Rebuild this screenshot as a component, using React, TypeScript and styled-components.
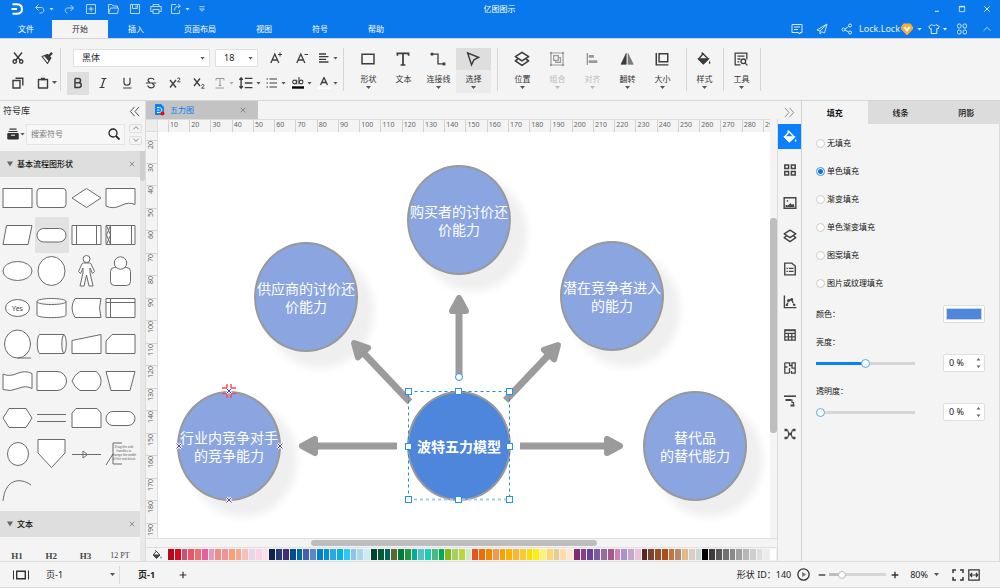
import React, { useState } from "react";
import styled, { createGlobalStyle, css } from "styled-components";

const Global = createGlobalStyle`
  *, *::before, *::after { box-sizing: border-box; }
  html, body { margin: 0; padding: 0; }
  body {
    font-family: "Noto Sans", "Noto Sans CJK SC", sans-serif;
    font-size: 8px;
    line-height: 12px;
    color: #222;
    background: #f4f4f4;
  }
  button, input, select { font: inherit; color: inherit; margin: 0; padding: 0; }
  button { background: none; border: 0; cursor: pointer; }
  svg { display: block; flex: none; }
`;

/* ---------- icons ---------- */

type IconProps = { d?: string; size?: number; w?: number; fill?: string; children?: React.ReactNode };

const Icon = ({ d, size = 12, w = 1, fill = "none", children }: IconProps) => (
  <svg width={size} height={size} viewBox="0 0 12 12" fill={fill} stroke="currentColor" strokeWidth={w} aria-hidden="true">
    {d && <path d={d} />}
    {children}
  </svg>
);

const Caret = styled.span<{ $color?: string }>`
  flex: none;
  width: 5px;
  height: 3px;
  background: ${(p) => p.$color ?? "#555"};
  clip-path: polygon(0 0, 100% 0, 50% 100%);
`;

const BucketIcon = ({ size = 12 }: { size?: number }) => (
  <Icon size={size} w={1.2}>
    <path d="M5.2 1.5L9.6 6L5.4 10L1.4 6Z" strokeLinejoin="round" />
    <path d="M1.6 6H9.4L5.4 9.8Z" fill="currentColor" />
    <path d="M4 .4L5.6 2.4" />
    <path d="M10.8 7.6C11.8 9.2 11.6 10.2 10.8 10.2S9.8 9.2 10.8 7.6Z" fill="currentColor" stroke="none" />
  </Icon>
);

const LayersIcon = ({ size = 12 }: { size?: number }) => (
  <Icon size={size} w={1.2}>
    <path d="M6 1L11 4.2L6 7.4L1 4.2Z" strokeLinejoin="round" />
    <path d="M3 6L1 7.400L6 10.800L11 7.400L9 6" strokeLinejoin="round" />
  </Icon>
);

/* ---------- page frame ---------- */

const Page = styled.div`
  display: flex;
  flex-direction: column;
  height: 100vh;
  overflow: hidden;
  border-bottom: 1px solid #dcdcdc;
`;

const Header = styled.header`
  flex: none;
  background: #0a78ed;
  color: #fff;
  border-bottom: 1px solid #d0d4da;
`;

const TitleRow = styled.div`
  display: grid;
  grid-template-columns: 1fr auto 1fr;
  align-items: center;
  height: 20px;
  padding: 0 1px 2px 0;
`;

const Title = styled.h1`
  margin: 0;
  font-size: 8px;
  font-weight: 400;
`;

const QuickBar = styled.div`
  display: flex;
  align-items: center;
  padding-left: 11px;
  color: #b5d7fb;
`;

const Logo = styled.div`
  width: 19px;
  color: #fff;
`;

const BarGroup = styled.div`
  display: flex;
  justify-content: flex-end;
  align-items: center;
  color: #d8eafd;
`;

const BarButton = styled.button<{ $w?: number }>`
  display: flex;
  align-items: center;
  justify-content: center;
  gap: 3px;
  width: ${(p) => p.$w ?? 25}px;
  height: 18px;
`;

const UserButton = styled.button`
  display: flex;
  align-items: center;
  gap: 1px;
  padding: 0 4px 0 0;
  font-size: 9px;
  color: #e6f1fe;
  ${Caret} { margin-left: 3px; }
`;

const MenuRow = styled.div`
  display: flex;
  justify-content: space-between;
  height: 18px;
  padding-right: 1px;
`;

const Menu = styled.nav`
  display: flex;
`;

const MenuTab = styled.button<{ $active?: boolean }>`
  padding: 0 20px;
  &:first-child { padding: 0 18px; }
  ${(p) => p.$active && css`background: #f4f4f4; color: #333;`}
`;

/* ---------- ribbon ---------- */

const Ribbon = styled.div`
  flex: none;
  display: flex;
  align-items: flex-start;
  height: 62px;
  padding-top: 7px;
  border-bottom: 1px solid #d4d4d4;
  color: #3c3c3c;
`;

const Rule = styled.span`
  flex: none;
  width: 1px;
  height: 43px;
  margin-top: 2px;
  background: #d6d6d6;
`;

const ClipGroup = styled.div`
  display: grid;
  grid-template-columns: 28px 26px;
  grid-template-rows: 24px 24px;
  row-gap: 1px;
  padding-left: 6px;
`;

const TextGroup = styled.div`
  display: grid;
  grid-template-rows: 24px 24px;
  row-gap: 1px;
  width: 282px;
`;

const ToolRow = styled.div<{ $inset: number }>`
  display: flex;
  align-items: center;
  padding-left: ${(p) => p.$inset}px;
`;

const Tool = styled.button<{ $w?: number; $active?: boolean; $dim?: boolean }>`
  display: flex;
  align-items: center;
  justify-content: center;
  gap: 3px;
  width: ${(p) => p.$w ?? 24}px;
  height: 23px;
  ${(p) => p.$active && css`background: #dedede; margin-right: 2px;`}
  ${(p) => p.$dim && css`color: #999;`}
`;

const SelectBox = styled.label<{ $w: number }>`
  display: flex;
  align-items: center;
  width: ${(p) => p.$w}px;
  height: 18px;
  margin-right: 5px;
  padding-right: 4px;
  background: #fff;
  border: 1px solid #e0e0e0;
  border-radius: 1px;
`;

const Select = styled.select`
  appearance: none;
  flex: 1;
  min-width: 0;
  padding-left: 8px;
  border: 0;
  background: none;
  font-size: 9px;
  color: #222;
`;

const BigGroup = styled.div`
  display: flex;
  padding: 2px 6px 0 7px;
`;

const SoloGroup = styled(BigGroup)`
  padding: 2px 1px 0 0;
`;

const BigTool = styled.button<{ $active?: boolean; $off?: boolean }>`
  display: flex;
  flex-direction: column;
  align-items: center;
  width: 35px;
  height: 45px;
  line-height: 10px;
  white-space: nowrap;
  color: ${(p) => (p.$off ? "#bbb" : "#333")};
  background: ${(p) => (p.$active ? "#ebebeb" : "none")};
  & > i {
    display: flex;
    align-items: center;
    justify-content: center;
    width: 100%;
    height: 22px;
    margin-bottom: 4px;
    padding-right: 1px;
    color: ${(p) => (p.$off ? "#999" : "#3c3c3c")};
    background: ${(p) => (p.$active ? "#dedede" : "none")};
  }
  ${Caret} { margin-top: 2px; }
`;

/* ---------- body ---------- */

const Body = styled.div`
  flex: 1;
  min-height: 0;
  display: flex;
`;

const Library = styled.aside`
  flex: none;
  display: flex;
  flex-direction: column;
  width: 146px;
  border-right: 1px solid #dcdcdc;
`;

const LibTitle = styled.div`
  display: flex;
  align-items: center;
  justify-content: space-between;
  height: 20px;
  padding: 0 5px 0 3px;
  font-size: 9px;
  color: #333;
`;

const LibSearch = styled.div`
  display: flex;
  align-items: center;
  height: 30px;
  padding: 0 3px 4px 7px;
`;

const LibMenu = styled.button`
  display: flex;
  flex: none;
  align-items: center;
  gap: 1px;
  width: 19px;
  color: #333;
`;

const SearchBox = styled.label`
  display: flex;
  align-items: center;
  flex: 1;
  min-width: 0;
  height: 21px;
  padding: 0 4px;
  background: #f7f7f7;
  border: 1px solid #e4e4e4;
  input {
    flex: 1;
    min-width: 0;
    border: 0;
    outline: 0;
    background: none;
  }
  input::placeholder { color: #777; }
`;

const Steps = styled.div`
  flex: none;
  display: grid;
  gap: 3px;
  margin-left: 4px;
`;

const Step = styled.button`
  display: flex;
  align-items: center;
  justify-content: center;
  width: 13px;
  height: 9px;
  border: 1px solid #ddd;
  border-radius: 2px;
  color: #666;
`;

const LibScroll = styled.div`
  flex: 1;
  min-height: 0;
  display: flex;
  overflow: hidden;
`;

const LibList = styled.div`
  flex: 1;
  min-width: 0;
`;

const ScrollTrack = styled.div`
  flex: none;
  width: 5px;
  background: #e9e9e9;
`;

const ScrollThumb = styled.div`
  height: 30px;
  background: #cfcfcf;
  border-radius: 0 0 3px 3px;
`;

const SectionHead = styled.div`
  display: flex;
  align-items: center;
  gap: 4px;
  height: 26px;
  padding: 0 4px 0 7px;
  background: #dedede;
  font-weight: 500;
  color: #111;
  button { margin-left: auto; color: #777; }
`;

const ShapeGrid = styled.div`
  display: grid;
  grid-template-columns: repeat(4, 1fr);
  grid-template-rows: repeat(9, 1fr);
  height: 334px;
  padding: 3px 2px 2px 0;
`;

const ShapeCell = styled.button<{ $active?: boolean }>`
  display: flex;
  align-items: center;
  justify-content: center;
  overflow: hidden;
  background: ${(p) => (p.$active ? "#e2e2e2" : "none")};
`;

const TextShapes = styled.div`
  display: grid;
  grid-template-columns: repeat(4, 1fr);
  padding: 14px 3px 0 0;
`;

const TextShape = styled.button<{ $small?: boolean }>`
  font-family: "Liberation Serif", serif;
  font-size: ${(p) => (p.$small ? 8 : 9)}px;
  font-weight: ${(p) => (p.$small ? 400 : 700)};
  line-height: 10px;
  color: #444;
  white-space: nowrap;
`;

/* ---------- canvas ---------- */

const Work = styled.main`
  flex: 1;
  min-width: 0;
  display: flex;
  flex-direction: column;
`;

const DocTabs = styled.div`
  flex: none;
  height: 18px;
  display: flex;
`;

const DocTab = styled.div`
  display: flex;
  align-items: center;
  gap: 5px;
  width: 112px;
  padding: 0 11px 0 8px;
  background: #c3c3c3;
  color: #0a7cf5;
  button { margin-left: auto; color: #777; }
`;

const Stage = styled.div`
  flex: 1;
  min-height: 0;
  display: grid;
  grid-template-columns: 12px 1fr 8px;
  grid-template-rows: 13px 1fr 10px;
`;

const Corner = styled.div`
  background: #ececec;
  border: 1px solid #ddd;
  border-width: 1px 1px 1px 0;
`;

const TopRuler = styled.div`
  display: grid;
  grid-template-columns: 10px repeat(28, 3fr) 1fr;
  overflow: hidden;
  border-top: 1px solid #ddd;
  font-size: 7px;
  line-height: 9px;
  color: #666;
  span {
    min-width: 0;
    padding-left: 1px;
    border-left: 1px solid #d2d2d2;
  }
  span:first-child { border: 0; }
`;

const SideRuler = styled.div`
  display: grid;
  grid-template-rows: 8px repeat(17, 3fr) 2fr;
  overflow: hidden;
  border-right: 1px solid #ddd;
  font-size: 7px;
  line-height: 9px;
  color: #666;
  span {
    display: flex;
    min-height: 0;
    border-top: 1px solid #d2d2d2;
  }
  span:first-child { border: 0; }
  b {
    font-weight: 400;
    writing-mode: vertical-rl;
    transform: rotate(180deg);
    align-self: flex-start;
  }
`;

const Canvas = styled.div`
  position: relative;
  overflow: hidden;
  background: #fff;
`;

const Overlay = styled.svg`
  position: absolute;
  left: 0;
  top: 0;
`;

const Node = styled.div<{ $x: number; $y: number; $main?: boolean }>`
  position: absolute;
  left: ${(p) => p.$x - 52}px;
  top: ${(p) => p.$y - 55}px;
  display: flex;
  align-items: center;
  justify-content: center;
  width: 104px;
  height: 110px;
  border: 2px solid #999;
  border-radius: 50%;
  background: ${(p) => (p.$main ? "#4d86db" : "#8aa5e0")};
  box-shadow: ${(p) => (p.$main ? "none" : "14px 14px 8px 2px #efefef")};
  color: #fff;
  font-size: 14px;
  line-height: 18px;
  font-weight: ${(p) => (p.$main ? 700 : 400)};
  font-family: "Noto Sans CJK SC", sans-serif;
  text-align: center;
  white-space: pre;
`;

const VTrack = styled.div`
  grid-row: 1 / 3;
  grid-column: 3;
  display: grid;
  grid-template-rows: 99fr 216fr 105fr;
  border-right: 1px solid #dcdcdc;
  i { grid-row: 2; background: #bdbdbd; border-radius: 3px; }
`;

const HTrack = styled.div`
  grid-column: 1 / 4;
  display: grid;
  grid-template-columns: 165fr 286fr 180fr;
  border: 1px solid #e0e0e0;
  border-width: 1px 1px 1px 0;
  padding: 1px 0;
  i { grid-column: 2; background: #bdbdbd; border-radius: 3px; }
`;

const Palette = styled.div`
  flex: none;
  display: flex;
  height: 13px;
  padding: 1px 0;
  border-right: 1px solid #dcdcdc;
`;

const PaletteFill = styled.button`
  display: flex;
  align-items: center;
  justify-content: center;
  width: 22px;
  color: #444;
`;

const Swatch = styled.button`
  flex: 1;
  min-width: 0;
  border-right: 1px solid #f0eeee;
`;

/* ---------- right side ---------- */

const Strip = styled.div`
  flex: none;
  display: flex;
  flex-direction: column;
  width: 24px;
  border-right: 1px solid #d4d4d4;
  color: #444;
`;

const StripTop = styled.button`
  display: flex;
  align-items: center;
  justify-content: center;
  height: 23px;
  color: #777;
`;

const StripButton = styled.button<{ $active?: boolean }>`
  display: flex;
  align-items: center;
  justify-content: center;
  height: 25px;
  margin-bottom: 8px;
  ${(p) => p.$active && css`background: #0a80ff; color: #fff;`}
`;

const Panel = styled.aside`
  flex: none;
  width: 198px;
  border-right: 1px solid #dcdcdc;
  color: #111;
`;

const PanelTabs = styled.div`
  display: grid;
  grid-template-columns: repeat(3, 1fr);
  height: 23px;
`;

const PanelTab = styled.button<{ $active?: boolean }>`
  background: ${(p) => (p.$active ? "none" : "#dcdcdc")};
  font-weight: ${(p) => (p.$active ? 700 : 500)};
`;

const RadioList = styled.div`
  display: grid;
  grid-auto-rows: 28px;
  padding: 5px 0 0 14px;
`;

const RadioRow = styled.label`
  display: flex;
  align-items: center;
  gap: 2px;
  input {
    appearance: none;
    width: 9px;
    height: 9px;
    border: 1px solid #ccc;
    border-radius: 50%;
    background: #fff;
  }
  input:checked {
    border-color: #3a8ff0;
    background: radial-gradient(circle, #0a6fe8 0 2px, #fff 3px);
  }
`;

const Settings = styled.div`
  padding: 8px 14px 0;
`;

const SetRow = styled.div`
  display: flex;
  align-items: center;
  justify-content: space-between;
  height: 18px;
`;

const SetLabel = styled.label`
  display: block;
  padding: 13px 0 6px;
`;

const ColorButton = styled.button`
  width: 42px;
  height: 18px;
  padding: 2px;
  background: #fff;
  border: 1px solid #ddd;
  border-radius: 2px;
  i { display: block; height: 12px; background: #4d86db; border: 1px solid #c9d4e8; }
`;

const Range = styled.input<{ $pct: number; $w: number; $on: string; $ring: string; $r: number }>`
  appearance: none;
  width: ${(p) => p.$w}px;
  height: 10px;
  background: linear-gradient(
      to right,
      ${(p) => p.$on} ${(p) => p.$pct}%,
      #d6d6d6 ${(p) => p.$pct}%
    ) center / 100% 3px no-repeat;
  &::-webkit-slider-thumb {
    appearance: none;
    width: ${(p) => p.$r}px;
    height: ${(p) => p.$r}px;
    border: 1px solid ${(p) => p.$ring};
    border-radius: 50%;
    background: #fff;
  }
`;

const Spin = styled.div`
  display: flex;
  align-items: center;
  width: 42px;
  height: 18px;
  padding-right: 3px;
  background: #fff;
  border: 1px solid #e0e0e0;
  border-radius: 2px;
  input {
    width: 32px;
    padding-left: 5px;
    border: 0;
    background: none;
    font-size: 9px;
    color: #222;
  }
`;

const SpinArrows = styled.svg`
  margin-left: auto;
`;

/* ---------- status bar ---------- */

const Status = styled.footer`
  flex: none;
  display: flex;
  align-items: center;
  height: 26px;
  border-top: 1px solid #dcdcdc;
  font-size: 9px;
  color: #222;
`;

const PageView = styled.button`
  width: 42px;
  padding-left: 13px;
`;

const PageSelect = styled.label`
  display: flex;
  align-items: center;
  width: 78px;
  height: 18px;
  padding-right: 4px;
  border-right: 1px solid #dcdcdc;
  select { padding-left: 4px; }
`;

const PageTab = styled.button`
  margin-left: 18px;
  font-weight: 700;
`;

const StatusIcon = styled.button<{ $w: number }>`
  display: flex;
  align-items: center;
  justify-content: center;
  width: ${(p) => p.$w}px;
  height: 18px;
  color: #333;
`;

const StatusEnd = styled.div`
  display: flex;
  align-items: center;
  margin-left: auto;
  padding-right: 18px;
`;

const Zoom = styled.button`
  display: flex;
  align-items: center;
  gap: 6px;
  padding: 0 11px 0 6px;
`;

const AddPage = styled(StatusIcon)`
  margin-left: 17px;
`;

/* ---------- data ---------- */

const shapes: { name: string; draw: React.ReactNode }[] = [
  { name: "流程", draw: <rect x="3" y="8.5" width="29" height="19" /> },
  { name: "圆角矩形", draw: <rect x="3" y="8.5" width="29" height="19" rx="3" /> },
  { name: "判定", draw: <path d="M3 18L17.5 8.5L32 18L17.5 27.5Z" /> },
  { name: "文档", draw: <path d="M3 8.5H32V24.5Q26 21.5 18 25.5T3 26Z" /> },
  { name: "数据", draw: <path d="M6.5 8.5H32L28 27.5H3Z" /> },
  { name: "起止符", draw: <rect x="3" y="11.5" width="29" height="13.5" rx="6.7" /> },
  { name: "预定义流程", draw: <path d="M3 8.5H32V27.5H3ZM7.500 8.500V27.500M27.500 8.500V27.500" /> },
  { name: "准备流程", draw: <path d="M3 8.5H32V27.5H3ZM7.500 8.500V27.500M28.500 8.500V27.500M3.500 8.500L7.500 18L3.500 27.500M7.500 8.500L3.500 18L7.500 27.500" /> },
  { name: "椭圆", draw: <ellipse cx="17.500" cy="18" rx="14.500" ry="9.500" /> },
  { name: "圆形", draw: <ellipse cx="17.500" cy="18" rx="13.500" ry="14.500" /> },
  { name: "人", draw: <><circle cx="17.500" cy="6" r="3.500" /><path d="M14.500 10H20.500Q22 10 22.500 12L25.500 18.500L23.500 20.500L21 15V20L24 33H20L17.500 22L15 33H11L14 20V15L11.500 20.500L9.500 18.500L12.500 12Q13 10 14.500 10Z" /></> },
  { name: "用户", draw: <><rect x="7.500" y="14.500" width="20" height="18" rx="4" /><circle cx="17.500" cy="10" r="6.200" /></> },
  { name: "是", draw: <><ellipse cx="17.500" cy="18" rx="12" ry="8.500" /><text x="17.500" y="20.500" fontSize="7" textAnchor="middle" fill="#444" stroke="none">Yes</text></> },
  { name: "数据库", draw: <path d="M3 11.500C3 7.500 32 7.500 32 11.500V25C32 28.500 3 28.500 3 25ZM3 11.500C3 15.500 32 15.500 32 11.500" /> },
  { name: "存储数据", draw: <path d="M6 8.500H32Q29 18 32 27.500H6Q0 18 6 8.500Z" /> },
  { name: "内部存储", draw: <path d="M3 8.500H32V27.500H3ZM7.500 8.500V27.500M3 12.500H32" /> },
  { name: "顺序数据", draw: <><ellipse cx="17.500" cy="18" rx="13" ry="14" /><path d="M17.500 32H31" /></> },
  { name: "直接数据", draw: <path d="M5.500 8.500H30C33 11 33 25 30 27.500H5.500C2.500 25 2.500 11 5.500 8.500ZM30 8.500C27 11 27 25 30 27.500" /> },
  { name: "手动输入", draw: <path d="M3 14.500L32 8.500V27.500H3Z" /> },
  { name: "卡片", draw: <path d="M9 8.500H32V27.500H3V15Z" /> },
  { name: "纸带", draw: <path d="M3 11Q9 14 17 10.500T32 10.500V25.500Q26 22 18 25.500T3 26.500Z" /> },
  { name: "延期", draw: <path d="M3 8.500H23A9.500 9.500 0 0 1 23 27.500H3Z" /> },
  { name: "显示", draw: <path d="M11 8.500H27Q32 12 32 18T27 27.500H11Q5 24 3 18Q5 12 11 8.500Z" /> },
  { name: "手动操作", draw: <path d="M3 8.500H32L27 27.500H8Z" /> },
  { name: "准备", draw: <path d="M3 18L9 8.500H26L32 18L26 27.500H9Z" /> },
  { name: "并行模式", draw: <path d="M3 14.500H32M3 21.500H32" /> },
  { name: "循环界限", draw: <path d="M7 8.500H28L32 13V27.500H3V13Z" /> },
  { name: "终止符", draw: <rect x="3" y="11.500" width="29" height="14" rx="7" /> },
  { name: "跨页引用", draw: <ellipse cx="18" cy="18" rx="10.500" ry="11.500" /> },
  { name: "离页引用", draw: <path d="M4 3.500H31V17L17.500 31.500L4 17Z" /> },
  { name: "箭头线", draw: <path d="M3 18.500H32M14 15V22L18.500 18.500Z" /> },
  {
    name: "注释",
    draw: (
      <>
        <path d="M19 7H10V28H19M10 18L3 29" fill="none" />
        <g fontSize="3" textAnchor="middle" fill="#555" stroke="none">
          <text x="21" y="12">Drag the side</text>
          <text x="21" y="16">handles to</text>
          <text x="21" y="20">change the width</text>
          <text x="21" y="24">of the text block</text>
        </g>
      </>
    ),
  },
  { name: "弧线", draw: <path d="M3 28C5 6 20 4 31 12" fill="none" /> },
];

const colors = (
  "b50819 dc0a1e c8527a ef5366 ee6c72 e95e9e e39ab9 ee8d86 f2919b ff9d73 f2ab92 f7bebb ead5e9 ffd2e3 ffdfe6 " +
  "0f2350 243b76 40307c 004b93 0068a6 4262ae 5a87c6 007fcf 0090d8 2ea8e0 00b2ee 2dc8f8 8cc3ea a3daf0 cdeaf5 " +
  "004431 005a36 00665c 566b30 007b3c 1f973f 00ad9b 55bfc2 1bcdb3 4bb983 00ae50 80bb17 a6d065 b9d73e cfe8c9 " +
  "e8531f ee6c00 f28800 f4984e f5a400 ffb300 fdb62f fcc92e ffdc00 fff000 fbf17b ffd574 e9cb93 ffdca9 fde8cf " +
  "7b3072 85408a 65429a 7a5b9f 9a6a9f a25a8b d181b4 a893cf c6a7c9 eac0da " +
  "572a1d 7b4231 964e2a a94f1f c1763b b6886c e0b987 d6cfc7 cbd6cc " +
  "000000 403b3b 585858 727272 8a8a8a a0a0a0 b6b6b6 cccfce dedede ececec ffffff"
).split(" ");

const nodes = [
  { x: 301, y: 88, text: "购买者的讨价还\n价能力" },
  { x: 148, y: 165, text: "供应商的讨价还\n价能力" },
  { x: 454, y: 164, text: "潜在竞争者进入\n的能力" },
  { x: 71, y: 314, text: "行业内竞争对手\n的竞争能力" },
  { x: 537, y: 314, text: "替代品\n的替代能力" },
  { x: 301, y: 314, text: "波特五力模型", main: true },
];

const arrows = [
  { x: 301, y: 163, angle: -90, len: 80 },
  { x: 141, y: 314, angle: 180, len: 98 },
  { x: 465, y: 314, angle: 0, len: 103 },
  { x: 194, y: 209, angle: -133.5, len: 84 },
  { x: 402, y: 211, angle: -46.5, len: 79 },
];

const fills = ["无填充", "单色填充", "渐变填充", "单色渐变填充", "图案填充", "图片或纹理填充"];
const menus = ["文件", "开始", "插入", "页面布局", "视图", "符号", "帮助"];
const handles = [[250, 259], [300, 259], [351, 259], [250, 314], [351, 314], [250, 367], [300, 367], [351, 367]];
const anchors = [[71, 259], [21, 314], [122, 314], [71, 368]];

const shapeTools = [
  { name: "形状", icon: <Icon size={16} w={1.1} d="M1.500 2.500H10.500V9.500H1.500Z" />, caret: true },
  { name: "文本", icon: <Icon size={16} w={1.3} d="M1.800 3.500V1.700H10.200V3.500M6 1.700V10.500M4.200 10.500H7.800" /> },
  { name: "连接线", icon: <Icon size={16} w={1}><path d="M2 2.300H6V9.700H10" /><circle cx="1.500" cy="2.300" r=".7" fill="currentColor" /><circle cx="10.500" cy="9.700" r=".7" fill="currentColor" /></Icon>, caret: true },
  { name: "选择", icon: <Icon size={16} w={1.1} d="M2 1.500L10.200 4.800L6.700 6.600L4.900 10.400Z" />, caret: true, active: true },
];

const arrangeTools = [
  { name: "位置", icon: <LayersIcon size={16} /> },
  { name: "组合", off: true, icon: <Icon size={16} w={0.9}><path d="M1.500 1.500H10.500V10.500H1.500ZM3.500 3.500H7V7H3.500ZM7 5H8.600V8.600H5V7" /><path d="M.7 1.500H2.300M9.700 1.500H11.300M.7 10.500H2.300M9.700 10.500H11.300" strokeWidth="1.600" /></Icon> },
  { name: "对齐", off: true, icon: <Icon size={16} w={1}><path d="M2.500 1.500V10.500" /><path d="M3.500 4H7.500M3.500 8H10" strokeWidth="2" /></Icon> },
  { name: "翻转", icon: <Icon size={16} w={0.5}><path d="M5.400 1.800V10H1.500Z" fill="currentColor" /><path d="M6.800 1.800V10H10.700Z" fill="currentColor" opacity=".65" /></Icon> },
  { name: "大小", icon: <Icon size={16} w={1.1}><path d="M3.800 2H10.300V8H3.800Z" /><path d="M1.700 1.500V10.400H10.800" /></Icon> },
];

const strip = [
  { name: "填充", icon: <BucketIcon size={14} /> },
  { name: "符号", icon: <Icon w={1.5}><path d="M.8 1H4.600V4.600H.8ZM7.400 1H11.200V4.600H7.400ZM.8 7.400H4.600V11H.8ZM7.400 7.400H11.200V11H7.400Z" /></Icon> },
  { name: "图片", icon: <Icon size={14} w={1.2}><path d="M1 1.500H11V10.500H1Z" /><path d="M2.200 9.400V7.400L4.200 8.200L6.500 6L7.500 7.400L9 6.600L9.900 9.400Z" fill="currentColor" stroke="none" /><circle cx="3.800" cy="4.200" r=".7" fill="currentColor" stroke="none" /></Icon> },
  { name: "图层", icon: <LayersIcon size={14} /> },
  { name: "页面", icon: <Icon size={14} w={1.2}><path d="M1.500 1H7.500L10.500 3.500V11H1.500Z" /><path d="M3 5.500H4.200M5 5.500H9M3 8H4.200M5 8H9" /></Icon> },
  { name: "图表", icon: <Icon size={14} w={1.2}><path d="M1.200 .5V10.800H11.500" /><path d="M3.400 8.600L4.600 5.500M7.900 5L9.400 8.600M5.300 4.600L7 4" strokeDasharray="2 .6" /><circle cx="4.800" cy="4.800" r=".7" fill="currentColor" /><circle cx="7.500" cy="3.800" r=".7" fill="currentColor" /><circle cx="3.300" cy="8.500" r=".4" /><circle cx="9.700" cy="8.500" r=".4" /></Icon> },
  { name: "表格", icon: <Icon w={1.3}><path d="M.8 .8H11.200V11.200H.8ZM.8 4.400H11.200M.8 7.800H11.200M4.400 4.400V11M7.800 4.400V11" /><path d="M1 1.500H11" /></Icon> },
  { name: "平面图", icon: <Icon w={1.3}><path d="M.8 .8H5.600V3.500H8V.8H11.200V11.200H7.500V9M5 11.200H.8V.8M.8 5H3.500M5.500 6V11.200M7.500 6.200H11.200M8 3.500V6" /></Icon> },
  { name: "样式", icon: <Icon w={1.6}><path d="M0 1.200H12" /><path d="M8 4.500V7.500H9.500V10.500" strokeWidth="1.200" /><path d="M1.500 5H7.500M6.500 10.400H10.500" strokeWidth="2" /></Icon> },
  { name: "思维导图", icon: <Icon w={1.2}><path d="M1.500 2H3.500L5 6L3.500 10H1.500M10.500 2H8.500L7 6L8.500 10H10.500M4 6H8" /><path d="M.5 2H3M.5 10H3M9 2H11.500M9 10H11.500M5 6H7" strokeWidth="2.400" /></Icon> },
];

const Arrow = ({ x, y, angle, len }: { x: number; y: number; angle: number; len: number }) => (
  <g transform={`translate(${x} ${y}) rotate(${angle})`} stroke="#9b9b9b" fill="#9b9b9b">
    <path d={`M${-len} 0H-12`} strokeWidth="7" />
    <path d="M-3 0L-16 -7V7Z" strokeWidth="6" strokeLinejoin="round" />
  </g>
);

const Close = ({ label }: { label: string }) => (
  <button aria-label={label}>
    <Icon size={8} w={1.2} d="M2.500 2.500L9.500 9.500M9.500 2.500L2.500 9.500" />
  </button>
);

const Arrows = () => (
  <SpinArrows width="5" height="12" viewBox="0 0 5 12" fill="#666" aria-hidden="true">
    <path d="M.5 3.500H4.500L2.500 1ZM.5 8.500H4.500L2.500 11Z" />
  </SpinArrows>
);

/* ---------- app ---------- */

export default function App() {
  const [fill, setFill] = useState(1);
  const [light, setLight] = useState(50);
  const [alpha, setAlpha] = useState(0);
  const [zoom, setZoom] = useState(18);

  return (
    <Page>
      <Global />
      <Header>
        <TitleRow>
          <QuickBar>
            <Logo>
              <Icon w={2} d="M1.500 1.200H5.500C9.800 1.200 11 3.600 11 6S9.800 10.800 5.500 10.800H1.500M.5 6H6" />
            </Logo>
            <BarButton $w={28} aria-label="撤销"><Icon d="M4.500 1.500L1.500 4.500L4.500 7.500M1.500 4.500H7.500C10.500 4.500 10.500 9.500 7.500 10H5.500" /><Caret $color="#cfe4fc" /></BarButton>
            <BarButton $w={22} aria-label="重做"><Icon d="M7.500 2L10.500 5L7.500 8M10.500 5H4.500C1.500 5 1.500 9.500 4.500 10" /></BarButton>
            <BarButton $w={22} aria-label="新建"><Icon d="M1.500 1.500H10.500V10.500H1.500ZM6 3.500V8.500M3.500 6H8.500" /></BarButton>
            <BarButton $w={22} aria-label="打开"><Icon d="M1.500 10.500V1.500H5L6 3H10.500V5M1.500 10.500L3.500 5H11.500L10.500 10.500Z" /></BarButton>
            <BarButton $w={21} aria-label="保存"><Icon d="M1.500 1.500H10.500V10.500H1.500ZM3.500 1.500V5.500H8.500V1.500M7 2.500V4.500" /></BarButton>
            <BarButton $w={22} aria-label="打印"><Icon d="M3 3.500V1.500H9V3.500M3 8.500H.8V3.500H11.200V8.500H9M3 6.500H9V10.500H3Z" /></BarButton>
            <BarButton $w={26} aria-label="导出"><Icon d="M6 1.500H1.500V10.500H9.500V7M4.500 7.500C4.500 4.500 6.500 3 10 3M8 1L10.500 3L8 5" /><Caret $color="#cfe4fc" /></BarButton>
            <BarButton $w={18} aria-label="自定义"><Icon size={8} w={1.4} d="M2 2.500H10"><path d="M2.500 6H9.500L6 9.500Z" /></Icon></BarButton>
          </QuickBar>
          <Title>亿图图示</Title>
          <BarGroup>
            <BarButton aria-label="最小化"><Icon size={8} w={1.6} d="M3 9.500H9" /></BarButton>
            <BarButton aria-label="最大化"><Icon size={8} w={1.3}><path d="M2 2H10V10H2Z" /><path d="M2 2.500H10" strokeWidth="2" /></Icon></BarButton>
            <BarButton aria-label="关闭"><Icon size={8} w={1.5} d="M2 2L10 10M10 2L2 10" /></BarButton>
          </BarGroup>
        </TitleRow>
        <MenuRow>
          <Menu>
            {menus.map((m, i) => (
              <MenuTab key={m} $active={i === 1}>{m}</MenuTab>
            ))}
          </Menu>
          <BarGroup>
            <BarButton aria-label="评论"><Icon d="M1 1.500H11V9.500H9V11L7 9.500H1ZM3 4H9M3 6.500H7" /></BarButton>
            <BarButton aria-label="发送"><Icon w={0.9} d="M11 1L1 7L4 8V11L5.500 8.800L8.500 10L11 1L4 8" /></BarButton>
            <BarButton aria-label="分享"><Icon><circle cx="2.500" cy="6.500" r="1.500" /><circle cx="9" cy="2.500" r="1.500" /><circle cx="9" cy="9.500" r="1.500" /><path d="M4 6L7.500 3.500M4 7L7.500 9" /></Icon></BarButton>
            <UserButton>
              Lock.Lock
              <svg width="12" height="12" viewBox="0 0 12 12" aria-hidden="true">
                <path d="M2.500 .5H9.500L12 4V6L6.500 12H5.500L0 6V4Z" fill="#f7ae3d" />
                <path d="M3.500 4L6 7.500L8.500 4" fill="none" stroke="#fff" strokeWidth="1.600" />
              </svg>
              <Caret $color="#e6f1fe" />
            </UserButton>
            <BarButton $w={23} aria-label="主题"><Icon d="M4 1.500C4.500 3 7.500 3 8 1.500L11.200 3.500L10 6L8.800 5.500V10.500H3.200V5.500L2 6L.8 3.500Z" /><Caret $color="#e6f1fe" /></BarButton>
            <BarButton aria-label="应用"><Icon><rect x="1.500" y="1" width="3.500" height="4" rx="1.500" /><rect x="7" y="1" width="3.500" height="4" rx="1.500" /><rect x="1.500" y="7" width="3.500" height="4" rx="1.500" /><rect x="7" y="7" width="3.500" height="4" rx="1.500" /></Icon></BarButton>
            <BarButton aria-label="收起功能区"><Icon size={10} d="M2 8L6 4L10 8" /></BarButton>
          </BarGroup>
        </MenuRow>
      </Header>

      <Ribbon>
        <ClipGroup>
          <Tool aria-label="剪切"><Icon w={1.4}><path d="M2 .5L8.500 8.500M10 .5L3.500 8.500" /><circle cx="2.800" cy="9.500" r="1.700" /><circle cx="9.200" cy="9.500" r="1.700" /></Icon></Tool>
          <Tool $w={26} aria-label="格式刷"><Icon w={1.1}><path d="M1 4.500L6.500 2.500L9.800 6L6.500 11.500Z" strokeLinejoin="round" /><path d="M6 3L9.500 6.200L8 8.500L3.800 4Z" fill="currentColor" /><path d="M8 4L11 .8" strokeWidth="2.400" /></Icon></Tool>
          <Tool aria-label="复制"><Icon w={1.4}><path d="M1 3.500H8V11H1Z" /><path d="M3.500 1.200H10.800V8.500" /></Icon></Tool>
          <Tool $w={26} aria-label="粘贴"><Icon w={1.4}><path d="M1.500 2.500H10.500V11H1.500Z" strokeLinejoin="round" /><path d="M4 2H8" strokeWidth="2.500" /></Icon><Caret /></Tool>
        </ClipGroup>
        <Rule />
        <TextGroup>
          <ToolRow $inset={12}>
            <SelectBox $w={137}>
              <Select aria-label="字体"><option>黑体</option></Select>
              <Caret />
            </SelectBox>
            <SelectBox $w={43}>
              <Select aria-label="字号"><option>18</option></Select>
              <Caret />
            </SelectBox>
            <Tool $w={26} aria-label="增大字号"><Icon w={1.3} d="M.8 11L4.800 2L8.800 11M2.300 8H7.300"><path d="M8 2.500H12M10 .5V4.500" strokeWidth="1" /></Icon></Tool>
            <Tool $w={26} aria-label="减小字号"><Icon w={1.3} d="M.8 11L4.800 2L8.800 11M2.300 8H7.300"><path d="M8.500 2.500H12" strokeWidth="1" /></Icon></Tool>
            <Tool $w={26} aria-label="对齐方式"><Icon w={1.3} d="M1 2H8M1 4.700H10.500M1 7.400H8M1 10H10.500" /><Caret /></Tool>
          </ToolRow>
          <ToolRow $inset={6}>
            <Tool $w={22} $active aria-label="加粗"><Icon w={1.500} d="M3 1.500H6.500C9.200 1.500 9.200 5.700 6.500 5.700H3M3 1.500V10.500H7C10 10.500 10 5.700 7 5.700" /></Tool>
            <Tool aria-label="斜体"><Icon w={1.200} d="M4.500 1.500H9.500M2.500 10.500H7.500M7.500 1.500L4.500 10.500" /></Tool>
            <Tool aria-label="下划线"><Icon w={1.200} d="M3 .8V5.500C3 9 9 9 9 5.500V.8M2 11H10.500" /></Tool>
            <Tool aria-label="删除线"><Icon w={1.200} d="M9 3C8.500 .5 3 .8 3 3.200C3 4.500 4 5 5 5.300M.8 6H11.200M7 6.500C11 8 9 10.800 6 10.800C4 10.800 3 9.800 2.800 8.500" /></Tool>
            <Tool aria-label="上标"><Icon w={1.300} d="M1 3L7 10.500M7 3L1 10.500"><path d="M8.500 2C8.500 .5 11 .5 11 2C11 3 8.500 4 8.500 4.800H11.500" strokeWidth=".9" /></Icon></Tool>
            <Tool aria-label="下标"><Icon w={1.300} d="M1 1.500L7 9M7 1.500L1 9"><path d="M8.500 8.500C8.500 7 11 7 11 8.500C11 9.500 8.500 10.500 8.500 11.200H11.500" strokeWidth=".9" /></Icon></Tool>
            <Tool $w={26} $dim aria-label="文字效果"><Icon w={1} d="M2 3.500V1.500H10V3.500M6 1.500V8.500M4.500 8.500H7.500M1.500 11H10" /><Caret $color="#aaa" /></Tool>
            <Tool $w={26} aria-label="行距"><Icon size={14} w={1.200} d="M5 2H11.500M5 6H11.500M5 10H11.500M1.800 1.500V10.500M.3 3.300L1.800 1.500L3.300 3.300M.3 8.700L1.800 10.500L3.300 8.700" /><Caret /></Tool>
            <Tool $w={26} aria-label="项目符号"><Icon w={1.200} d="M3.500 2H11M3.500 6H11M3.500 10H11M.5 2H2M.5 6H2M.5 10H2" /><Caret /></Tool>
            <Tool $w={26} aria-label="突出显示">
              <Icon w={1.100}><circle cx="2.600" cy="5" r="1.900" /><path d="M4.700 2.800V7.200" /><circle cx="9.100" cy="5" r="1.900" /><path d="M7 0V7.200" /><path d="M0 10.500H12" strokeWidth="2.400" stroke="#000" /></Icon>
              <Caret />
            </Tool>
            <Tool $w={26} aria-label="字体颜色">
              <Icon w={1.300}><path d="M2.500 8L6 .5L9.500 8M3.800 5.500H8.200" /><path d="M0 11H12" strokeWidth="2" stroke="#fff" /></Icon>
              <Caret />
            </Tool>
          </ToolRow>
        </TextGroup>
        <Rule />
        <BigGroup>
          {shapeTools.map((t) => (
            <BigTool key={t.name} $active={t.active}>
              <i>{t.icon}</i>
              {t.name}
              {t.caret && <Caret />}
            </BigTool>
          ))}
        </BigGroup>
        <Rule />
        <BigGroup>
          {arrangeTools.map((t) => (
            <BigTool key={t.name} $off={t.off}>
              <i>{t.icon}</i>
              {t.name}
              <Caret $color={t.off ? "#bbb" : undefined} />
            </BigTool>
          ))}
        </BigGroup>
        <Rule />
        <SoloGroup>
          <BigTool><i><BucketIcon size={14} /></i>样式<Caret /></BigTool>
        </SoloGroup>
        <Rule />
        <SoloGroup>
          <BigTool>
            <i><Icon size={14} w={1.100}><path d="M5.500 11H1V1H11V6.500M3 3.500H9M3 6H5.500M3 8.500H4.500" /><circle cx="8" cy="8" r="2" /><path d="M9.500 9.500L11.500 11.500" /></Icon></i>
            工具
            <Caret />
          </BigTool>
        </SoloGroup>
        <Rule />
      </Ribbon>

      <Body>
        <Library>
          <LibTitle>
            符号库
            <button aria-label="收起"><Icon size={11} w={0.9} d="M6 1L1.500 6L6 11M11 1L6.500 6L11 11" /></button>
          </LibTitle>
          <LibSearch>
            <LibMenu aria-label="符号库菜单">
              <Icon><path d="M2.500 1.200H9.500M1.500 3.500H10.500" strokeWidth="1.200" /><path d="M.8 5.500H11.200V11H.8Z" fill="currentColor" /><path d="M4 7.200H8" stroke="#fff" /></Icon>
              <Caret />
            </LibMenu>
            <SearchBox>
              <input aria-label="搜索符号" placeholder="搜索符号" />
              <Icon w={1.300}><circle cx="5" cy="5" r="4" /><path d="M8 8L11.500 11.500" strokeWidth="1.800" /></Icon>
            </SearchBox>
            <Steps>
              <Step aria-label="上一个"><Icon size={8} w={1.200} d="M2 8L6 4L10 8" /></Step>
              <Step aria-label="下一个"><Icon size={8} w={1.200} d="M2 4L6 8L10 4" /></Step>
            </Steps>
          </LibSearch>
          <LibScroll>
            <LibList>
              <SectionHead>
                <Icon size={6} w={0} fill="#666" d="M0 1H12L6 11Z" />
                基本流程图形状
                <Close label="关闭基本流程图形状" />
              </SectionHead>
              <ShapeGrid>
                {shapes.map((s, i) => (
                  <ShapeCell key={s.name} aria-label={s.name} $active={i === 5}>
                    <svg width="35" height="36" viewBox="0 0 35 36" fill="#fff" stroke="#6a6a6a" strokeWidth="1">{s.draw}</svg>
                  </ShapeCell>
                ))}
              </ShapeGrid>
              <SectionHead>
                <Icon size={6} w={0} fill="#666" d="M0 1H12L6 11Z" />
                文本
                <Close label="关闭文本" />
              </SectionHead>
              <TextShapes>
                <TextShape>H1</TextShape>
                <TextShape>H2</TextShape>
                <TextShape>H3</TextShape>
                <TextShape $small>12 PT</TextShape>
              </TextShapes>
            </LibList>
            <ScrollTrack><ScrollThumb /></ScrollTrack>
          </LibScroll>
        </Library>

        <Work>
          <DocTabs>
            <DocTab>
              <svg width="11" height="12" viewBox="0 0 11 12" aria-hidden="true">
                <path d="M1 0H7L10 3V11H1Z" fill="#0a80ff" />
                <path d="M3 3.500H5.500C8.500 3.500 8.500 8.500 5.500 8.500H3M3 6H5.500" fill="none" stroke="#fff" />
                <circle cx="8.500" cy="9.500" r="2" fill="#f00" />
              </svg>
              五力图
              <Close label="关闭文档" />
            </DocTab>
          </DocTabs>
          <Stage>
            <Corner />
            <TopRuler>
              <span />
              {Array.from({ length: 29 }, (_, i) => <span key={i}>{(i + 1) * 10}</span>)}
            </TopRuler>
            <VTrack><i /></VTrack>
            <SideRuler>
              <span />
              {Array.from({ length: 18 }, (_, i) => <span key={i}><b>{(i + 2) * 10}</b></span>)}
            </SideRuler>
            <Canvas>
              {nodes.map((n) => (
                <Node key={n.text} $x={n.x} $y={n.y} $main={n.main}>{n.text}</Node>
              ))}
              <Overlay width="611" height="407" viewBox="0 0 611 407" aria-hidden="true">
                {arrows.map((a) => <Arrow key={a.angle} {...a} />)}
                <path d="M250.500 367.500V259.500H351.500V367.500" fill="none" stroke="#1e88f0" strokeDasharray="3 3" />
                <path d="M250 367.500H351" stroke="#9fcbf8" strokeWidth="2" strokeDasharray="3 3" />
                {handles.map(([x, y]) => (
                  <rect key={`${x}-${y}`} x={x - 2.500} y={y - 2.500} width="6" height="6" fill="#fff" stroke="#2a8ff5" />
                ))}
                <circle cx="301" cy="245" r="3.500" fill="#fff" stroke="#2a8ff5" />
                <path d="M64 256H69V252M78 256H73V252M64 261.500H69V266M78 261.500H73V266" fill="none" stroke="#ff4b4b" strokeWidth="1.500" />
                {anchors.map(([x, y]) => (
                  <g key={`${x}-${y}`}>
                    <path d={`M${x - 2.500} ${y - 2.500}l5 5m0 -5l-5 5`} stroke="#fff" strokeWidth="2.500" />
                    <path d={`M${x - 2.500} ${y - 2.500}l5 5m0 -5l-5 5`} stroke="#4338e8" />
                  </g>
                ))}
              </Overlay>
            </Canvas>
            <HTrack><i /></HTrack>
          </Stage>
          <Palette>
            <PaletteFill aria-label="填充颜色"><BucketIcon size={10} /></PaletteFill>
            {colors.map((c) => (
              <Swatch key={c} aria-label={`#${c}`} style={{ backgroundColor: `#${c}` }} />
            ))}
          </Palette>
        </Work>

        <Strip>
          <StripTop aria-label="收起面板"><Icon size={11} w={0.9} d="M1 1L5.500 6L1 11M6 1L10.500 6L6 11" /></StripTop>
          {strip.map((s, i) => (
            <StripButton key={s.name} aria-label={s.name} $active={i === 0}>{s.icon}</StripButton>
          ))}
        </Strip>

        <Panel>
          <PanelTabs>
            <PanelTab $active>填充</PanelTab>
            <PanelTab>线条</PanelTab>
            <PanelTab>阴影</PanelTab>
          </PanelTabs>
          <RadioList>
            {fills.map((f, i) => (
              <RadioRow key={f}>
                <input type="radio" name="fill" checked={fill === i} onChange={() => setFill(i)} />
                {f}
              </RadioRow>
            ))}
          </RadioList>
          <Settings>
            <SetRow>
              颜色：
              <ColorButton aria-label="颜色"><i /></ColorButton>
            </SetRow>
            <SetLabel htmlFor="light">亮度：</SetLabel>
            <SetRow>
              <Range id="light" type="range" $w={99} $r={9} $on="#0a80ff" $ring="#5aa7f5" $pct={light} value={light} onChange={(e) => setLight(Number(e.target.value))} />
              <Spin><input aria-label="亮度值" defaultValue="0 %" /><Arrows /></Spin>
            </SetRow>
            <SetLabel htmlFor="alpha">透明度：</SetLabel>
            <SetRow>
              <Range id="alpha" type="range" $w={99} $r={9} $on="#0a80ff" $ring="#5aa7f5" $pct={alpha} value={alpha} onChange={(e) => setAlpha(Number(e.target.value))} />
              <Spin><input aria-label="透明度值" defaultValue="0 %" /><Arrows /></Spin>
            </SetRow>
          </Settings>
        </Panel>
      </Body>

      <Status>
        <PageView aria-label="页面视图">
          <svg width="16" height="10" viewBox="0 0 16 10" fill="none" stroke="#333" aria-hidden="true">
            <path d="M.5 .5V9.500M15.500 .5V9.500" />
            <path d="M3.700 1.200H12.300V8.800H3.700Z" strokeWidth="1.400" />
          </svg>
        </PageView>
        <PageSelect>
          <Select aria-label="页面"><option>页-1</option></Select>
          <Caret />
        </PageSelect>
        <PageTab>页-1</PageTab>
        <AddPage $w={22} aria-label="添加页面"><Icon size={8} w={1.800} d="M6 1V11M1 6H11" /></AddPage>
        <StatusEnd>
          形状 ID：140
          <StatusIcon $w={24} aria-label="播放"><Icon size={13} w={1.200}><circle cx="6" cy="6" r="5.200" /><path d="M4.800 3.500V8.500L8.500 6Z" fill="#777" stroke="none" /></Icon></StatusIcon>
          <StatusIcon $w={14} aria-label="缩小"><Icon size={8} w={2} d="M1 6H11" /></StatusIcon>
          <Range aria-label="缩放" type="range" $w={57} $r={8} $on="#bdbdbd" $ring="#bbb" $pct={zoom} value={zoom} onChange={(e) => setZoom(Number(e.target.value))} />
          <StatusIcon $w={18} aria-label="放大"><Icon size={8} w={2} d="M6 1V11M1 6H11" /></StatusIcon>
          <Zoom>80%<Caret /></Zoom>
          <StatusIcon $w={16} aria-label="全屏"><Icon w={1.500} d="M1 4V1H4M8 1H11V4M11 8V11H8M4 11H1V8" /></StatusIcon>
          <StatusIcon $w={16} aria-label="适合宽度"><Icon w={1.200}><path d="M.8 .8H11.200V11.200H.8Z" /><path d="M2.500 6H9.500M4 4L2.300 6L4 8M8 4L9.700 6L8 8" /></Icon></StatusIcon>
        </StatusEnd>
      </Status>
    </Page>
  );
}
